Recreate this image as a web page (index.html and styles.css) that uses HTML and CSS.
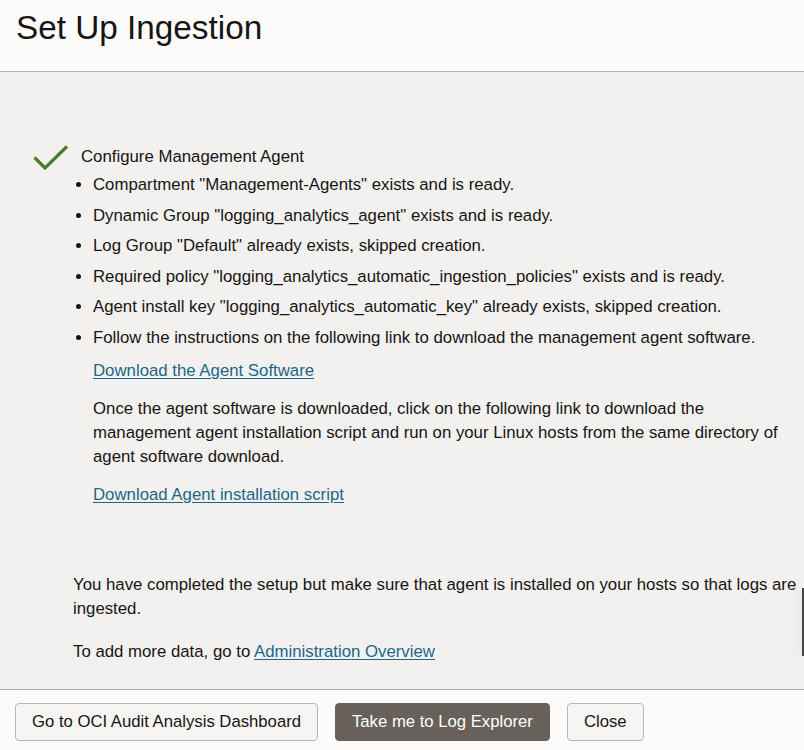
FILE: index.html
```html
<!DOCTYPE html>
<html lang="en">
<head>
<meta charset="utf-8">
<title>Set Up Ingestion</title>
<link rel="stylesheet" href="styles.css">
</head>
<body>
<div class="dialog">
  <header class="dialog-header">
    <h1 class="dialog-title">Set Up Ingestion</h1>
  </header>
  <main class="dialog-body">
    <section class="step">
      <div class="step-head">
        <svg class="step-check" width="36" height="26" viewBox="0 0 36 26" aria-hidden="true">
          <path d="M1.5 12.5 L12 23 L34 1.5" fill="none" stroke="#4e7b2b" stroke-width="3.2" stroke-linecap="butt" stroke-linejoin="miter"/>
        </svg>
        <span class="step-title">Configure Management Agent</span>
      </div>
      <ul class="step-list">
        <li>Compartment "Management-Agents" exists and is ready.</li>
        <li>Dynamic Group "logging_analytics_agent" exists and is ready.</li>
        <li>Log Group "Default" already exists, skipped creation.</li>
        <li>Required policy "logging_analytics_automatic_ingestion_policies" exists and is ready.</li>
        <li>Agent install key "logging_analytics_automatic_key" already exists, skipped creation.</li>
        <li class="step-item-last">Follow the instructions on the following link to download the management agent software.
          <p class="step-link-row"><a class="link" href="#">Download the Agent Software</a></p>
          <p class="step-para">Once the agent software is downloaded, click on the following link to download the management agent installation script and run on your Linux hosts from the same directory of agent software download.</p>
          <p class="step-link-row step-link-row-2"><a class="link" href="#">Download Agent installation script</a></p>
        </li>
      </ul>
    </section>
    <div class="summary">
      <p class="summary-text">You have completed the setup but make sure that agent is installed on your hosts so that logs are ingested.</p>
      <p class="summary-text summary-more">To add more data, go to <a class="link" href="#">Administration Overview</a></p>
    </div>
  </main>
  <footer class="dialog-footer">
    <button class="btn">Go to OCI Audit Analysis Dashboard</button>
    <button class="btn btn-primary">Take me to Log Explorer</button>
    <button class="btn">Close</button>
  </footer>
</div>
<div class="edge-handle"></div>
</body>
</html>
```

FILE: styles.css
```css
* { box-sizing: border-box; }

html, body {
  margin: 0;
  padding: 0;
}

body {
  font-family: "Liberation Sans", Arial, sans-serif;
  font-size: 16.8px;
  color: #161513;
  background: #fcfbfa;
  width: 804px;
  height: 750px;
  overflow: hidden;
}

.dialog {
  display: flex;
  flex-direction: column;
  height: 750px;
}

.dialog-header {
  height: 72px;
  background: #fcfbfa;
  border-bottom: 1px solid #b2b0ad;
  padding: 8px 0 0 16px;
}

.dialog-title {
  margin: 0;
  font-weight: normal;
  font-size: 33.3px;
  line-height: 40px;
}

.dialog-body {
  height: 618px;
  background: #f2f1f0;
  padding-top: 73px;
  border-bottom: 1px solid #b2b0ad;
}

.step-head {
  display: flex;
  align-items: flex-start;
  padding-left: 33px;
  height: 24px;
}

.step-check {
  display: block;
  margin-top: 0;
  flex: none;
}

.step-title {
  margin-left: 12px;
  line-height: 24px;
}

.step-list {
  margin: 4px 0 0 0;
  padding-left: 93px;
  padding-right: 16px;
  line-height: 24px;
}

.step-list li {
  margin-bottom: 6.6px;
}

.step-list li.step-item-last {
  margin-bottom: 0;
}

.step-link-row {
  margin: 9px 0 0 0;
}

.step-link-row-2 {
  margin-top: 14px;
}

.step-para {
  margin: 14px 0 0 0;
}

.link {
  color: #1d6787;
  text-decoration: underline;
  text-underline-offset: 2px;
}

.summary {
  margin-top: 66px;
  padding: 0 2px 0 73px;
}

.summary-text {
  margin: 0;
  line-height: 24px;
}

.summary-more {
  margin-top: 19px;
}

.dialog-footer {
  flex: 1;
  background: #fcfbfa;
  display: flex;
  align-items: flex-start;
  gap: 17px;
  padding: 13px 0 0 15px;
}

.btn {
  font-family: "Liberation Sans", Arial, sans-serif;
  font-size: 16.7px;
  color: #161513;
  background: #f6f5f4;
  border: 1px solid #b9b6b2;
  border-radius: 4px;
  height: 38px;
  padding: 0 16px;
  line-height: 36px;
}

.btn-primary {
  background: #68615b;
  border-color: #68615b;
  color: #ffffff;
}

.edge-handle {
  position: fixed;
  right: 0;
  top: 588px;
  width: 2px;
  height: 68px;
  background: #4a4846;
  box-shadow: -3px 0 10px rgba(0, 0, 0, 0.10);
}
```
